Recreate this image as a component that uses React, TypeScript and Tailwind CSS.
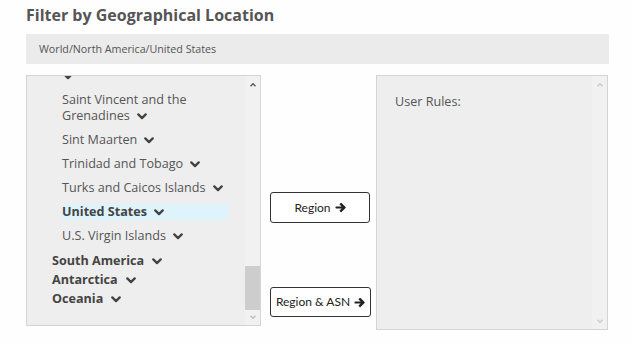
const Chevron = ({ className = "" }: { className?: string }) => (
    <svg
        viewBox="0 0 10 7"
        className={`inline-block h-[7px] w-[10px] ${className}`}
        fill="none"
        stroke="currentColor"
        strokeWidth="2.3"
        strokeLinecap="round"
        strokeLinejoin="round"
    >
        <path d="M1.3 1.4 5 5.1 8.7 1.4" />
    </svg>
);

const ArrowRight = () => (
    <svg viewBox="0 0 12 12" className="ml-[4px] inline-block h-[11px] w-[11px]" fill="currentColor">
        <path d="M6.2 1.1 5.2 2.1a.6.6 0 0 0 0 .9L7.3 5H1.2a.7.7 0 0 0-.7.7v.6a.7.7 0 0 0 .7.7h6.1L5.2 9a.6.6 0 0 0 0 .9l1 1a.6.6 0 0 0 .9 0L11.5 6.5a.7.7 0 0 0 0-1L7.1 1.1a.6.6 0 0 0-.9 0Z" />
    </svg>
);

const ScrollUp = ({ color }: { color: string }) => (
    <svg viewBox="0 0 8 6" className={`h-[5px] w-[8px] ${color}`} fill="none" stroke="currentColor" strokeWidth="1.6">
        <path d="M1 5 4 2l3 3" />
    </svg>
);

const ScrollDown = ({ color }: { color: string }) => (
    <svg viewBox="0 0 8 6" className={`h-[5px] w-[8px] ${color}`} fill="none" stroke="currentColor" strokeWidth="1.6">
        <path d="M1 1l3 3 3-3" />
    </svg>
);

const countries = [
    "Saint Vincent and the Grenadines",
    "Sint Maarten",
    "Trinidad and Tobago",
    "Turks and Caicos Islands",
    "United States",
    "U.S. Virgin Islands",
];

const continents = ["South America", "Antarctica", "Oceania"];

export default function App() {
    return (
        <div
            className="h-[344px] w-[632px] bg-[#fefefe] pl-[26px] text-[#555]"
            style={{ fontFamily: "'Open Sans', sans-serif" }}
        >
            <h1 className="pt-[4px] text-[16px] font-bold leading-[22px] text-[#555]">
                Filter by Geographical Location
            </h1>

            <div className="mt-[8px] flex h-[30px] w-[583px] items-center bg-[#ebebeb] pl-[13px] text-[10.7px] text-[#555]">
                World/North America/United States
            </div>

            <div className="mt-[11px] flex">

                {/* left tree */}
                <div className="flex h-[251px] w-[235px] border border-[#d4d4d4] bg-[#eeeeee]">
                    <div className="flex-1 overflow-hidden text-[12.6px]">
                        <div className="-mt-[3px] ml-[36px] flex h-[15px] items-start text-[#444]">
                            <Chevron />
                        </div>

                        {countries.map((c) => {
                            const selected = c === "United States";
                            return (
                                <div key={c} className="mr-[17px] ml-[34px] py-[4px]">
                                    <div
                                        className={`pl-[1px] leading-[16px] ${
                                            selected
                                                ? "bg-[#def3fb] font-bold text-[#444]"
                                                : "text-[#555]"
                                        }`}
                                    >
                                        {c}
                                        <Chevron className="ml-[7px] text-[#444]" />
                                    </div>
                                </div>
                            );
                        })}

                        <div className="mt-[3px]">
                            {continents.map((c) => (
                                <div key={c} className="ml-[25px] font-bold leading-[19px] text-[#444]">
                                    {c}
                                    <Chevron className="ml-[8px] text-[#444]" />
                                </div>
                            ))}
                        </div>
                    </div>

                    <div className="flex w-[15px] flex-col bg-[#f1f1f1]">
                        <div className="flex h-[15px] items-center justify-center pt-[2px]">
                            <ScrollUp color="text-[#555]" />
                        </div>
                        <div className="flex-1" />
                        <div className="h-[44px] bg-[#cdcdcd]" />
                        <div className="flex h-[15px] items-center justify-center">
                            <ScrollDown color="text-[#bbb]" />
                        </div>
                    </div>
                </div>

                {/* buttons */}
                <div
                    className="flex w-[115px] flex-col pl-[9px] pt-[117px] text-[12px] text-[#222]"
                    style={{ fontFamily: "Lato, sans-serif" }}
                >
                    <button className="flex h-[31px] w-[100px] items-center justify-center rounded-[3px] border border-[#333] bg-white">
                        Region
                        <ArrowRight />
                    </button>
                    <button className="mt-[64px] flex h-[30px] w-[101px] items-center justify-center rounded-[3px] border border-[#333] bg-white">
                        Region &amp; ASN
                        <ArrowRight />
                    </button>
                </div>

                {/* right panel */}
                <div className="flex h-[255px] w-[232px] border border-[#d4d4d4] bg-[#eeeeee]">
                    <div className="flex-1 pl-[18px] pt-[17px] text-[12.6px] leading-[18px] text-[#555]">
                        User Rules:
                    </div>
                    <div className="flex w-[15px] flex-col justify-between bg-[#f1f1f1]">
                        <div className="flex h-[15px] items-center justify-center pt-[2px]">
                            <ScrollUp color="text-[#ccc]" />
                        </div>
                        <div className="flex h-[15px] items-center justify-center">
                            <ScrollDown color="text-[#ccc]" />
                        </div>
                    </div>
                </div>

            </div>
        </div>
    );
}
